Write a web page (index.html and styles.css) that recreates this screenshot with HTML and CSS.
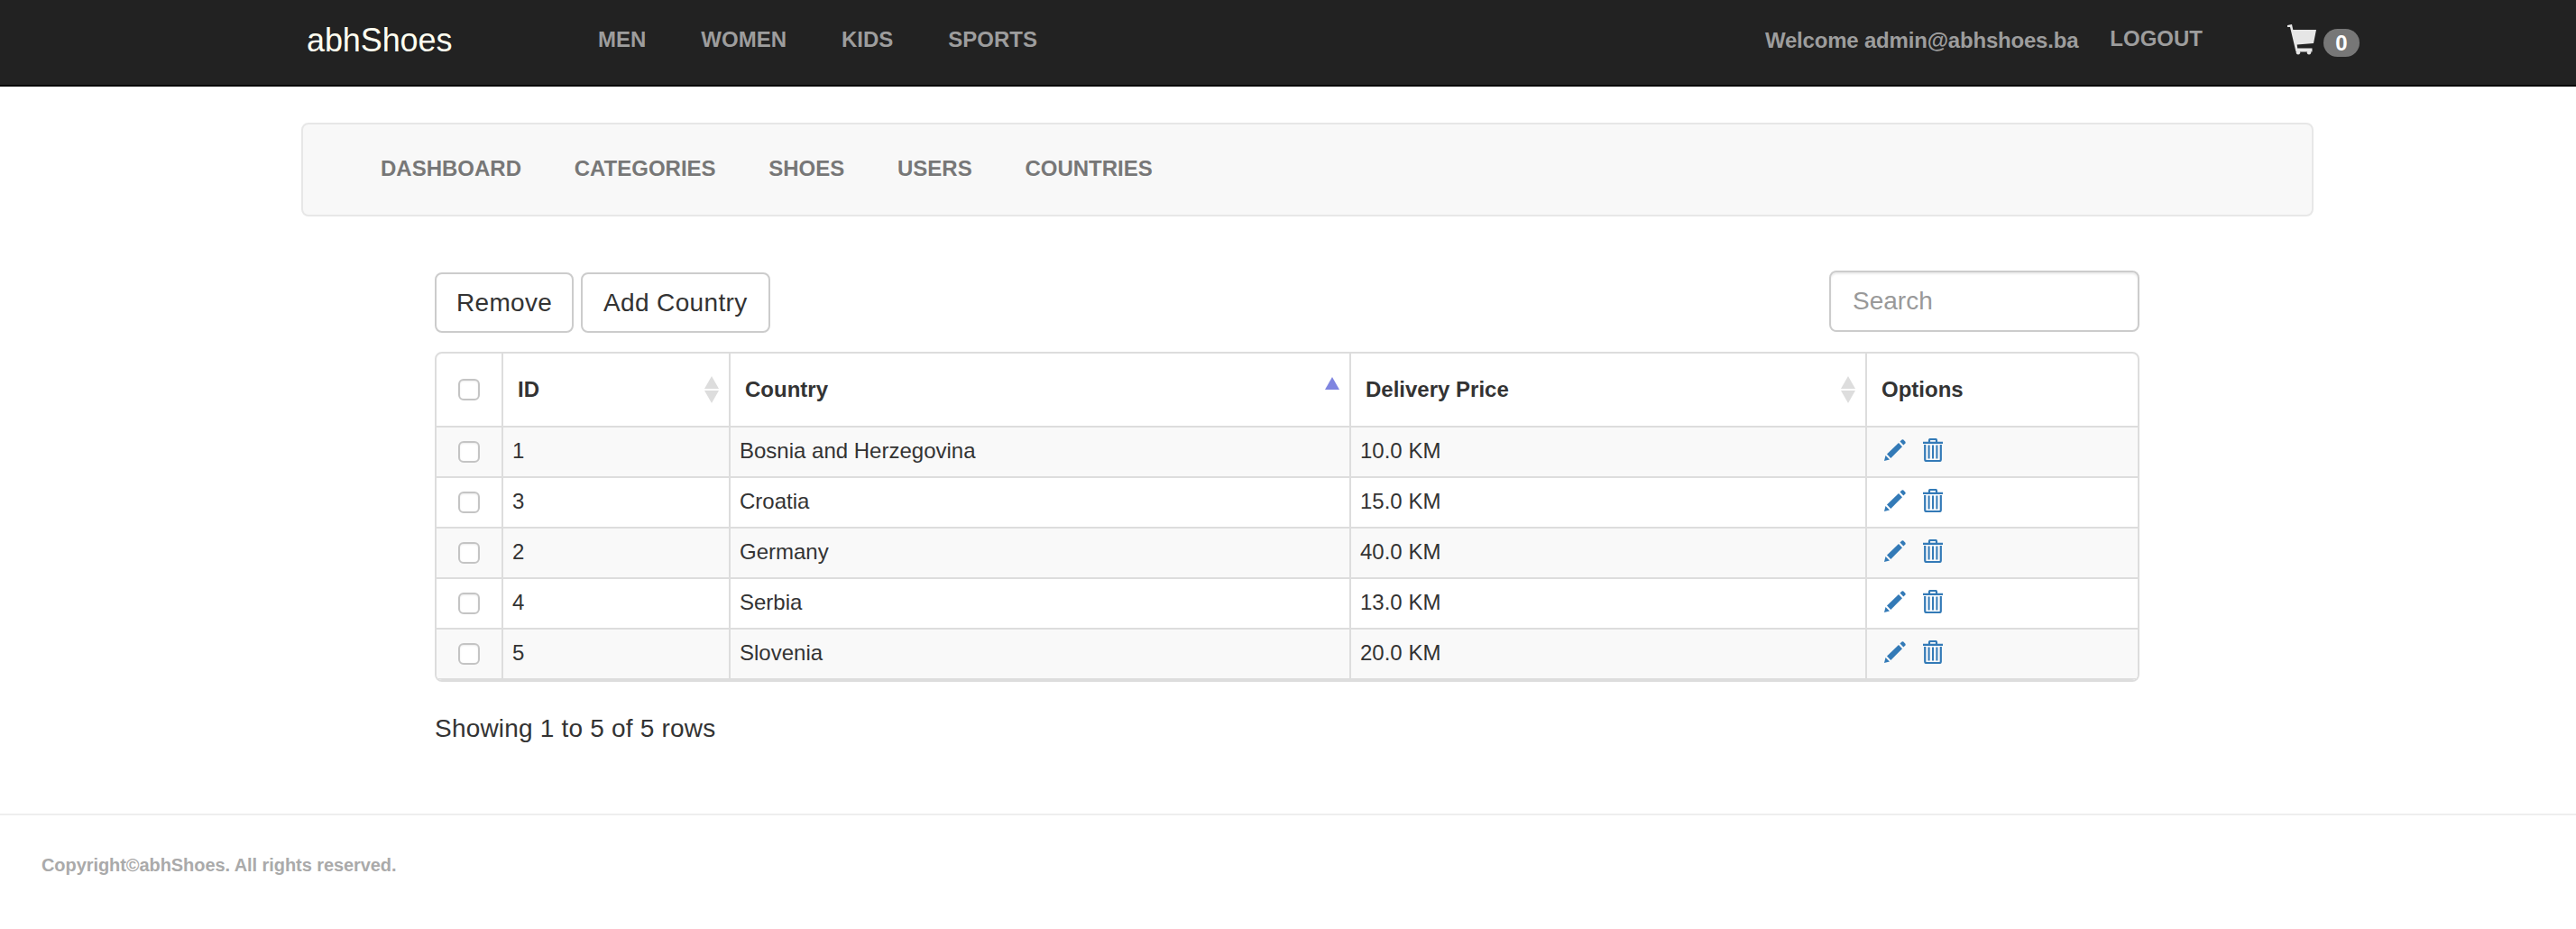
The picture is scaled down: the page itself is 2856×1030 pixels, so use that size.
FILE: index.html
```html
<!DOCTYPE html>
<html lang="en">
<head>
    <meta charset="UTF-8">
    <meta name="viewport" content="width=device-width, initial-scale=1.0">
    <title>abhShoes</title>
    <link rel="stylesheet" href="styles.css">
</head>
<body>

    <!-- top navigation -->
    <nav class="navbar">
        <a class="brand" href="#">abhShoes</a>
        <ul class="nav-links">
            <li><a href="#">Men</a></li>
            <li><a href="#">Women</a></li>
            <li><a href="#">Kids</a></li>
            <li><a href="#">Sports</a></li>
        </ul>
        <div class="nav-right">
            <span class="welcome">Welcome admin@abhshoes.ba</span>
            <a class="logout" href="#">Logout</a>
            <a class="cart" href="#">
                <svg class="cart-icon" viewBox="0 0 32 34">
                    <path d="M0 1 L5 0 L6.3 6 H32 L29 21 L10.7 22.6 L11.2 26.6 H27.5 V30.5 H9.5 L3 3 L0 3 Z"/>
                    <circle cx="12" cy="31.2" r="2.2"/>
                    <circle cx="24" cy="31.2" r="2.2"/>
                </svg>
                <span class="badge">0</span>
            </a>
        </div>
    </nav>

    <!-- admin navigation -->
    <div class="admin-nav">
        <a href="#">Dashboard</a>
        <a href="#">Categories</a>
        <a href="#">Shoes</a>
        <a href="#">Users</a>
        <a href="#">Countries</a>
    </div>

    <div class="content">
        <div class="toolbar">
            <div class="toolbar-buttons">
                <button class="btn">Remove</button>
                <button class="btn">Add Country</button>
            </div>
            <input class="search" type="text" placeholder="Search">
        </div>

        <div class="table-box">
            <table class="country-table">
                <colgroup>
                    <col class="col-check">
                    <col class="col-id">
                    <col class="col-country">
                    <col class="col-price">
                    <col class="col-options">
                </colgroup>
                <thead>
                    <tr>
                        <th class="cell-check"><input class="check" type="checkbox"></th>
                        <th><div class="th-inner">ID<span class="sort"><i class="arrow-up"></i><i class="arrow-down"></i></span></div></th>
                        <th><div class="th-inner">Country<span class="sort sort-active"><i class="arrow-up"></i></span></div></th>
                        <th><div class="th-inner">Delivery Price<span class="sort"><i class="arrow-up"></i><i class="arrow-down"></i></span></div></th>
                        <th><div class="th-inner">Options</div></th>
                    </tr>
                </thead>
                <tbody>
                    <tr>
                        <td class="cell-check"><input class="check" type="checkbox"></td>
                        <td>1</td>
                        <td>Bosnia and Herzegovina</td>
                        <td>10.0 KM</td>
                        <td class="cell-options">
                            <svg class="icon-edit" viewBox="0 0 24 24"><path d="M0 24 L1.5 18 L6 22.5 Z"/><path d="M3 16.5 L16 4 L20 8.3 L7.3 21 Z"/><path d="M17.5 2.6 L19.6 .6 Q20.5 0 21.3 .6 L23.4 2.8 Q24 3.7 23.4 4.5 L21.4 6.6 Z"/></svg>
                            <svg class="icon-trash" viewBox="0 0 22 26"><path class="trash-line" d="M7 4 V2.2 Q7 1 8.2 1 H13.8 Q15 1 15 2.2 V4 M0 4.8 H22"/><path class="trash-line" d="M2.2 7 V23.5 Q2.2 25 3.7 25 H18.3 Q19.8 25 19.8 23.5 V7"/><path class="trash-bars" d="M6.6 7.5 V22.5 M11 7.5 V22.5 M15.4 7.5 V22.5"/></svg>
                        </td>
                    </tr>
                    <tr>
                        <td class="cell-check"><input class="check" type="checkbox"></td>
                        <td>3</td>
                        <td>Croatia</td>
                        <td>15.0 KM</td>
                        <td class="cell-options">
                            <svg class="icon-edit" viewBox="0 0 24 24"><path d="M0 24 L1.5 18 L6 22.5 Z"/><path d="M3 16.5 L16 4 L20 8.3 L7.3 21 Z"/><path d="M17.5 2.6 L19.6 .6 Q20.5 0 21.3 .6 L23.4 2.8 Q24 3.7 23.4 4.5 L21.4 6.6 Z"/></svg>
                            <svg class="icon-trash" viewBox="0 0 22 26"><path class="trash-line" d="M7 4 V2.2 Q7 1 8.2 1 H13.8 Q15 1 15 2.2 V4 M0 4.8 H22"/><path class="trash-line" d="M2.2 7 V23.5 Q2.2 25 3.7 25 H18.3 Q19.8 25 19.8 23.5 V7"/><path class="trash-bars" d="M6.6 7.5 V22.5 M11 7.5 V22.5 M15.4 7.5 V22.5"/></svg>
                        </td>
                    </tr>
                    <tr>
                        <td class="cell-check"><input class="check" type="checkbox"></td>
                        <td>2</td>
                        <td>Germany</td>
                        <td>40.0 KM</td>
                        <td class="cell-options">
                            <svg class="icon-edit" viewBox="0 0 24 24"><path d="M0 24 L1.5 18 L6 22.5 Z"/><path d="M3 16.5 L16 4 L20 8.3 L7.3 21 Z"/><path d="M17.5 2.6 L19.6 .6 Q20.5 0 21.3 .6 L23.4 2.8 Q24 3.7 23.4 4.5 L21.4 6.6 Z"/></svg>
                            <svg class="icon-trash" viewBox="0 0 22 26"><path class="trash-line" d="M7 4 V2.2 Q7 1 8.2 1 H13.8 Q15 1 15 2.2 V4 M0 4.8 H22"/><path class="trash-line" d="M2.2 7 V23.5 Q2.2 25 3.7 25 H18.3 Q19.8 25 19.8 23.5 V7"/><path class="trash-bars" d="M6.6 7.5 V22.5 M11 7.5 V22.5 M15.4 7.5 V22.5"/></svg>
                        </td>
                    </tr>
                    <tr>
                        <td class="cell-check"><input class="check" type="checkbox"></td>
                        <td>4</td>
                        <td>Serbia</td>
                        <td>13.0 KM</td>
                        <td class="cell-options">
                            <svg class="icon-edit" viewBox="0 0 24 24"><path d="M0 24 L1.5 18 L6 22.5 Z"/><path d="M3 16.5 L16 4 L20 8.3 L7.3 21 Z"/><path d="M17.5 2.6 L19.6 .6 Q20.5 0 21.3 .6 L23.4 2.8 Q24 3.7 23.4 4.5 L21.4 6.6 Z"/></svg>
                            <svg class="icon-trash" viewBox="0 0 22 26"><path class="trash-line" d="M7 4 V2.2 Q7 1 8.2 1 H13.8 Q15 1 15 2.2 V4 M0 4.8 H22"/><path class="trash-line" d="M2.2 7 V23.5 Q2.2 25 3.7 25 H18.3 Q19.8 25 19.8 23.5 V7"/><path class="trash-bars" d="M6.6 7.5 V22.5 M11 7.5 V22.5 M15.4 7.5 V22.5"/></svg>
                        </td>
                    </tr>
                    <tr>
                        <td class="cell-check"><input class="check" type="checkbox"></td>
                        <td>5</td>
                        <td>Slovenia</td>
                        <td>20.0 KM</td>
                        <td class="cell-options">
                            <svg class="icon-edit" viewBox="0 0 24 24"><path d="M0 24 L1.5 18 L6 22.5 Z"/><path d="M3 16.5 L16 4 L20 8.3 L7.3 21 Z"/><path d="M17.5 2.6 L19.6 .6 Q20.5 0 21.3 .6 L23.4 2.8 Q24 3.7 23.4 4.5 L21.4 6.6 Z"/></svg>
                            <svg class="icon-trash" viewBox="0 0 22 26"><path class="trash-line" d="M7 4 V2.2 Q7 1 8.2 1 H13.8 Q15 1 15 2.2 V4 M0 4.8 H22"/><path class="trash-line" d="M2.2 7 V23.5 Q2.2 25 3.7 25 H18.3 Q19.8 25 19.8 23.5 V7"/><path class="trash-bars" d="M6.6 7.5 V22.5 M11 7.5 V22.5 M15.4 7.5 V22.5"/></svg>
                        </td>
                    </tr>
                </tbody>
            </table>
        </div>

        <p class="table-info">Showing 1 to 5 of 5 rows</p>
    </div>

    <footer class="footer">Copyright©abhShoes. All rights reserved.</footer>

</body>
</html>
```

FILE: styles.css
```css
body {
    font-family: "Liberation Sans", Arial, sans-serif;
    margin: 0;
    padding: 0;
    background-color: #fff;
    color: #333;
    font-size: 28px;
}

a {
    text-decoration: none;
}

/* top navigation */
.navbar {
    display: flex;
    align-items: center;
    height: 94px;
    padding: 0 240px 0 340px;
    background-color: #222;
    border-bottom: 2px solid #080808;
}

.brand {
    width: 323px;
    font-size: 36px;
    color: #fffff0;
    margin-top: -4px;
    letter-spacing: -0.1px;
}

.nav-links {
    display: flex;
    gap: 61px;
    list-style: none;
    margin: -8px 0 0;
    padding: 0;
}

.nav-links a {
    font-size: 24px;
    font-weight: bold;
    text-transform: uppercase;
    color: #9d9d9d;
}

.nav-right {
    display: flex;
    align-items: center;
    margin-left: auto;
}

.welcome {
    font-size: 24px;
    font-weight: bold;
    color: #9d9d9d;
    letter-spacing: -0.2px;
    margin-right: 35px;
    margin-top: -5px;
}

.logout {
    font-size: 24px;
    font-weight: bold;
    text-transform: uppercase;
    color: #9d9d9d;
    margin-right: 94px;
    margin-top: -8px;
}

.cart {
    display: flex;
    align-items: flex-start;
    gap: 8px;
    margin-top: -4px;
}

.cart-icon {
    width: 32px;
    height: 34px;
    fill: #e6e6e6;
}

.badge {
    min-width: 40px;
    height: 31px;
    margin-top: 5px;
    border-radius: 16px;
    background-color: #777;
    color: #fff;
    font-size: 24px;
    font-weight: bold;
    line-height: 31px;
    text-align: center;
}

/* admin navigation */
.admin-nav {
    display: flex;
    align-items: center;
    gap: 58.7px;
    box-sizing: border-box;
    width: 2231px;
    height: 104px;
    margin: 40px 0 0 334px;
    padding: 0 0 2px 86px;
    background-color: #f8f8f8;
    border: 2px solid #e7e7e7;
    border-radius: 8px;
}

.admin-nav a {
    font-size: 24px;
    font-weight: bold;
    text-transform: uppercase;
    color: #777;
}

/* table area */
.content {
    width: 1890px;
    margin-left: 482px;
}

.toolbar {
    display: flex;
    justify-content: space-between;
    align-items: flex-start;
    margin-top: 60px;
    margin-bottom: 21px;
}

.toolbar-buttons {
    display: flex;
    gap: 8px;
    margin-top: 2px;
}

.btn {
    height: 67px;
    padding: 0 22px;
    font-family: inherit;
    font-size: 28px;
    letter-spacing: 0.3px;
    color: #333;
    background-color: #fff;
    border: 2px solid #ccc;
    border-radius: 8px;
}

.btn + .btn {
    padding: 0 23px;
    letter-spacing: 0.35px;
}

.search {
    box-sizing: border-box;
    width: 344px;
    height: 68px;
    padding: 0 24px;
    font-family: inherit;
    font-size: 28px;
    color: #555;
    background-color: #fff;
    border: 2px solid #ccc;
    border-radius: 8px;
    outline: none;
    box-shadow: inset 0 2px 2px rgba(0, 0, 0, 0.075);
}

.search::placeholder {
    color: #999;
}

.table-box {
    border: 2px solid #ddd;
    border-radius: 8px;
    overflow: hidden;
}

.country-table {
    width: 100%;
    table-layout: fixed;
    border-collapse: separate;
    border-spacing: 0;
    font-size: 24px;
}

.col-check { width: 72px; }
.col-id { width: 252px; }
.col-country { width: 688px; }
.col-price { width: 572px; }
.col-options { width: 302px; }

.country-table th,
.country-table td {
    box-sizing: border-box;
    border-left: 2px solid #ddd;
    padding: 0;
}

.country-table th:first-child,
.country-table td:first-child {
    border-left: none;
}

.country-table th {
    height: 80px;
    text-align: left;
    font-weight: bold;
}

.country-table td {
    height: 56px;
    padding: 0 10px 3px;
    border-top: 2px solid #ddd;
}

.country-table tbody tr:last-child td {
    height: 58px;
    border-bottom: 2px solid #ddd;
}

.country-table tbody tr:nth-child(odd) {
    background-color: #f9f9f9;
}

.th-inner {
    display: flex;
    justify-content: space-between;
    align-items: center;
    padding: 0 11px 0 16px;
}

.country-table .cell-check {
    padding: 0 0 0 24px;
}

.country-table tbody .cell-check {
    padding-bottom: 1px;
}

.check {
    display: block;
    appearance: none;
    box-sizing: border-box;
    width: 24px;
    height: 24px;
    margin: 0;
    background-color: #fff;
    border: 2px solid #c4c4c4;
    border-radius: 6px;
    box-shadow: inset 0 1px 2px rgba(0, 0, 0, 0.08);
}

/* sort arrows in the table head */
.sort {
    display: flex;
    flex-direction: column;
    gap: 2px;
}

.arrow-up,
.arrow-down {
    display: block;
    width: 0;
    height: 0;
    border-left: 8px solid transparent;
    border-right: 8px solid transparent;
}

.arrow-up {
    border-bottom: 14px solid #ddd;
}

.arrow-down {
    border-top: 14px solid #ddd;
}

.sort-active {
    margin-bottom: 14px;
}

.sort-active .arrow-up {
    border-bottom-color: #7f85e0;
}

.country-table .cell-options {
    padding: 0 0 7px 19px;
}

.icon-edit,
.icon-trash {
    display: inline-block;
    vertical-align: middle;
}

.icon-edit {
    width: 24px;
    height: 24px;
    fill: #337ab7;
    margin-right: 12px;
}

.icon-trash {
    width: 22px;
    height: 26px;
}

.trash-line {
    fill: none;
    stroke: #337ab7;
    stroke-width: 2.2;
}

.trash-bars {
    fill: none;
    stroke: #337ab7;
    stroke-width: 2;
}

.table-info {
    margin: 32px 0 0;
    line-height: 40px;
    letter-spacing: 0.2px;
}

.footer {
    margin-top: 74px;
    padding: 40px 0 0 46px;
    border-top: 2px solid #eee;
    font-size: 20px;
    font-weight: bold;
    line-height: 30px;
    letter-spacing: -0.07px;
    color: #aaa;
}
```
